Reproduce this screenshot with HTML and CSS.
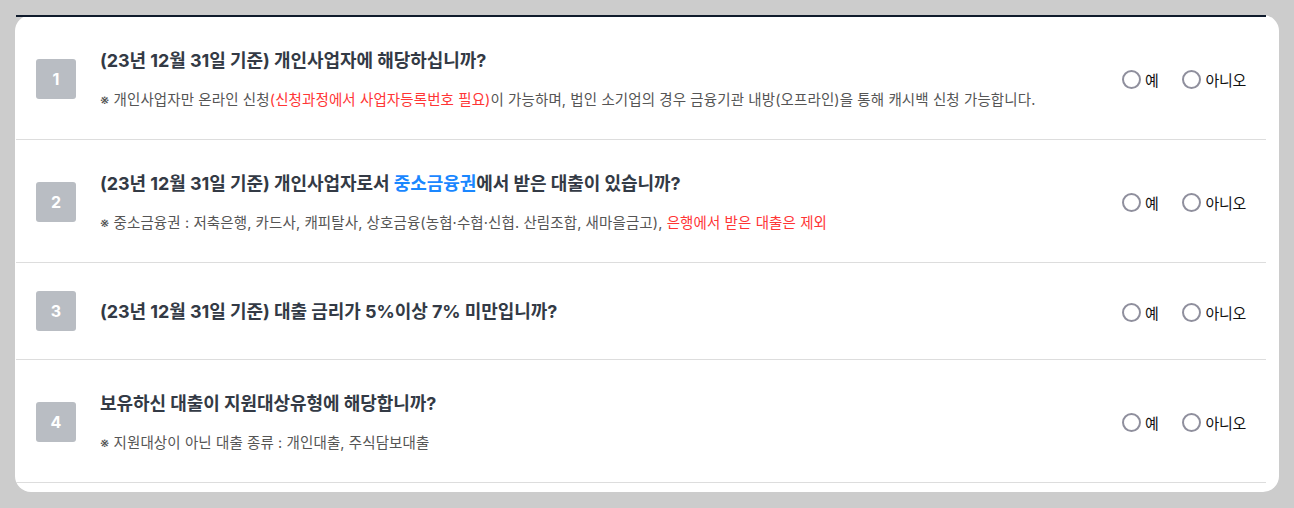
FILE: index.html
```html
<!DOCTYPE html>
<html lang="ko">
<head>
<meta charset="utf-8">
<link rel="stylesheet" href="styles.css">
</head>
<body>
<div class="card">
  <ul class="qlist">
    <li class="q">
      <span class="q-num">1</span>
      <div class="q-body">
        <p class="q-title">(23년 12월 31일 기준) 개인사업자에 해당하십니까?</p>
        <p class="q-note">※ 개인사업자만 온라인 신청<span class="red">(신청과정에서 사업자등록번호 필요)</span>이 가능하며, 법인 소기업의 경우 금융기관 내방(오프라인)을 통해 캐시백 신청 가능합니다.</p>
      </div>
      <div class="q-opts">
        <label class="opt"><span class="radio"></span>예</label>
        <label class="opt"><span class="radio"></span>아니오</label>
      </div>
    </li>
    <li class="q">
      <span class="q-num">2</span>
      <div class="q-body">
        <p class="q-title">(23년 12월 31일 기준) 개인사업자로서 <span class="blue">중소금융권</span>에서 받은 대출이 있습니까?</p>
        <p class="q-note">※ 중소금융권 : 저축은행, 카드사, 캐피탈사, 상호금융(농협·수협·신협. 산림조합, 새마을금고), <span class="red">은행에서 받은 대출은 제외</span></p>
      </div>
      <div class="q-opts">
        <label class="opt"><span class="radio"></span>예</label>
        <label class="opt"><span class="radio"></span>아니오</label>
      </div>
    </li>
    <li class="q q-single">
      <span class="q-num">3</span>
      <div class="q-body">
        <p class="q-title">(23년 12월 31일 기준) 대출 금리가 5%이상 7% 미만입니까?</p>
      </div>
      <div class="q-opts">
        <label class="opt"><span class="radio"></span>예</label>
        <label class="opt"><span class="radio"></span>아니오</label>
      </div>
    </li>
    <li class="q">
      <span class="q-num">4</span>
      <div class="q-body">
        <p class="q-title">보유하신 대출이 지원대상유형에 해당합니까?</p>
        <p class="q-note">※ 지원대상이 아닌 대출 종류 : 개인대출, 주식담보대출</p>
      </div>
      <div class="q-opts">
        <label class="opt"><span class="radio"></span>예</label>
        <label class="opt"><span class="radio"></span>아니오</label>
      </div>
    </li>
  </ul>
</div>
</body>
</html>
```

FILE: styles.css
```css
* { box-sizing: border-box; }
html, body { margin: 0; padding: 0; }
body {
  background: #cccccc;
  padding: 15px 15px 0 15px;
  font-family: "Inter", "Noto Sans CJK KR", "Noto Sans", sans-serif;
  height: 508px;
  overflow: hidden;
}
.card {
  width: 1264px;
  height: 477px;
  background: #ffffff;
  border-radius: 16px;
  padding: 0 13px 0 0;
}
.qlist {
  list-style: none;
  margin: 0 0 0 1px;
  padding: 0;
  border-top: 2px solid #0f1b2c;
}
.q {
  display: flex;
  align-items: center;
  padding: 30px 20px 29px 20px;
  border-bottom: 1px solid #dddddd;
}
.q-single {
  padding-top: 28px;
  padding-bottom: 28px;
}
.q-num {
  flex: none;
  width: 40px;
  height: 40px;
  border-radius: 3px;
  background: #b9bdc3;
  color: #ffffff;
  font-weight: 700;
  font-size: 16px;
  display: flex;
  align-items: center;
  justify-content: center;
}
.q-body {
  flex: 1;
  margin-left: 24px;
}
.q-title {
  margin: 0;
  padding-top: 1px;
  font-size: 18px;
  line-height: 26px;
  font-weight: 700;
  color: #333a45;
  letter-spacing: -0.05px;
}
.q-note {
  margin: 16px 0 0 0;
  font-size: 14.5px;
  line-height: 20px;
  color: #555555;
  letter-spacing: 0.1px;
}
.red { color: #ff3535; }
.blue { color: #1a87ff; }
.q-opts {
  flex: none;
  display: flex;
  align-items: center;
  gap: 24px;
  margin-top: 2px;
}
.opt {
  display: flex;
  align-items: center;
  gap: 4px;
  font-size: 15px;
  color: #111111;
  letter-spacing: -0.3px;
}
.radio {
  width: 19px;
  height: 19px;
  border: 2px solid #8f8f9d;
  border-radius: 50%;
  background: #fff;
}
```
